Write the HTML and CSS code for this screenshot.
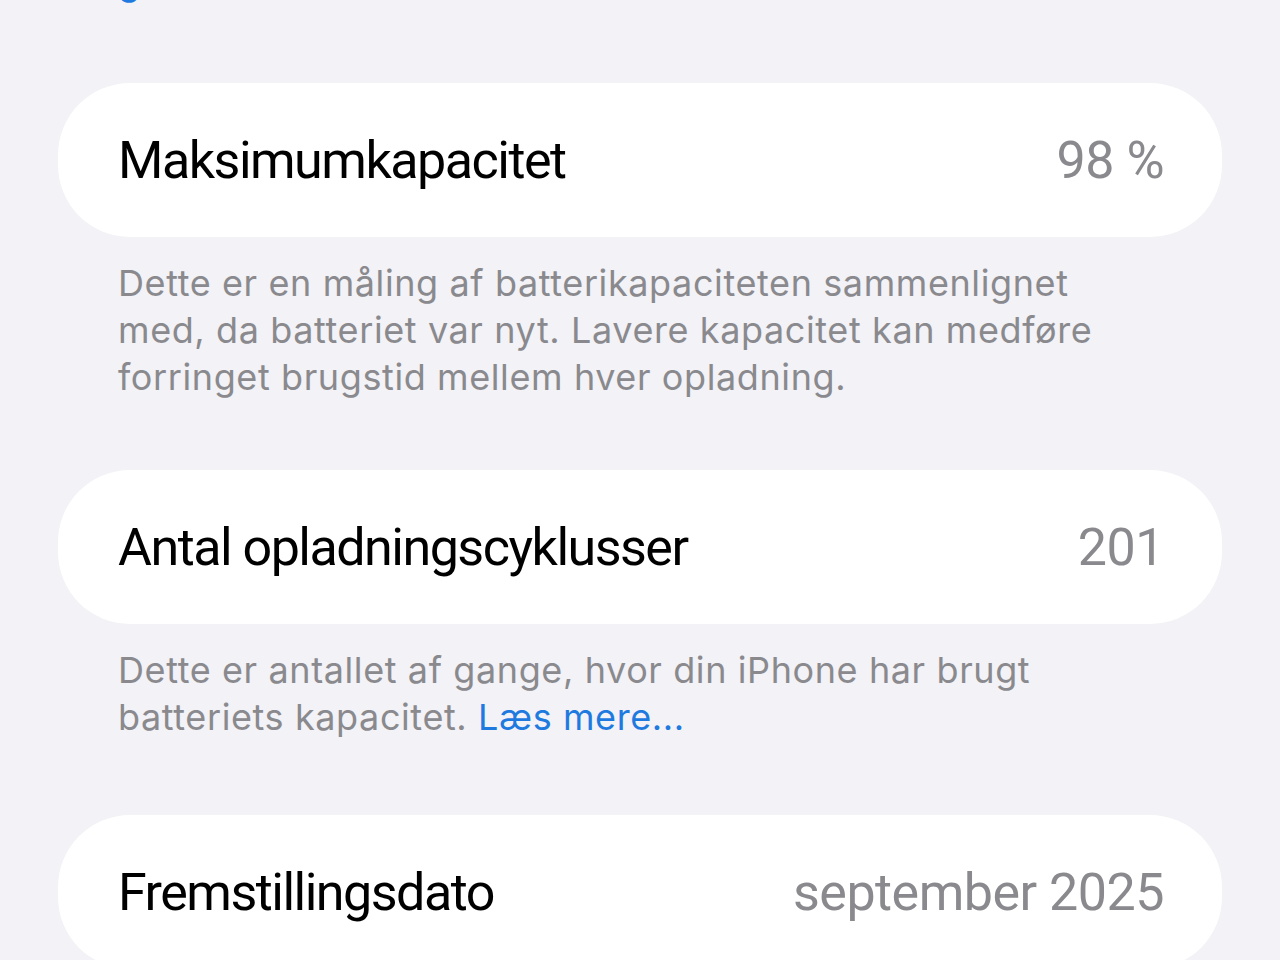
FILE: index.html
```html
<!DOCTYPE html>
<html lang="da">
<head>
    <meta charset="UTF-8">
    <meta name="viewport" content="width=device-width, initial-scale=1.0">
    <title>Batteritilstand</title>
    <link rel="stylesheet" href="styles.css">
</head>
<body>

<div class="page">
    <!-- tail of the section above -->
    <p class="footer lead"><a href="#">garanti.</a></p>

    <div class="group">
        <div class="cell">
            <span class="label">Maksimumkapacitet</span>
            <span class="value">98 %</span>
        </div>
    </div>
    <p class="footer">Dette er en måling af batterikapaciteten sammenlignet med, da batteriet var nyt. Lavere kapacitet kan medføre forringet brugstid mellem hver opladning.</p>

    <div class="group">
        <div class="cell">
            <span class="label">Antal opladningscyklusser</span>
            <span class="value">201</span>
        </div>
    </div>
    <p class="footer">Dette er antallet af gange, hvor din iPhone har brugt batteriets kapacitet. <a href="#">Læs mere...</a></p>

    <div class="group last">
        <div class="cell">
            <span class="label">Fremstillingsdato</span>
            <span class="value">september 2025</span>
        </div>
    </div>
</div>

</body>
</html>
```

FILE: styles.css
```css
body {
    margin: 0;
    padding: 0;
    background-color: #f2f2f7;
    font-family: Inter, "Noto Sans", sans-serif;
    overflow: hidden;
}

.page {
    padding: 0 58px;
}

/* Inset grouped cell */
.group {
    background-color: #ffffff;
    border-radius: 72px;
    margin-top: 69px;
}

.group.last {
    margin-top: 74px;
}

.cell {
    display: flex;
    justify-content: space-between;
    align-items: center;
    height: 154px;
    padding: 0 58px 0 60px;
}

.label,
.value {
    font-family: Roboto, "Noto Sans", sans-serif;
    font-size: 52px;
}

.label {
    color: #000000;
    letter-spacing: -1.5px;
}

.value {
    color: #8a8a8e;
    letter-spacing: -0.5px;
}

/* Gray text under a group */
.footer {
    margin: 23px 0 0;
    padding: 0 100px 0 60px;
    font-size: 36px;
    line-height: 47px;
    color: #8a8a8e;
    letter-spacing: 0.6px;
}

.footer a {
    color: #1f7ae0;
    text-decoration: none;
}

.footer.lead {
    margin-top: -41px;
    padding-bottom: 8px;
}
```
